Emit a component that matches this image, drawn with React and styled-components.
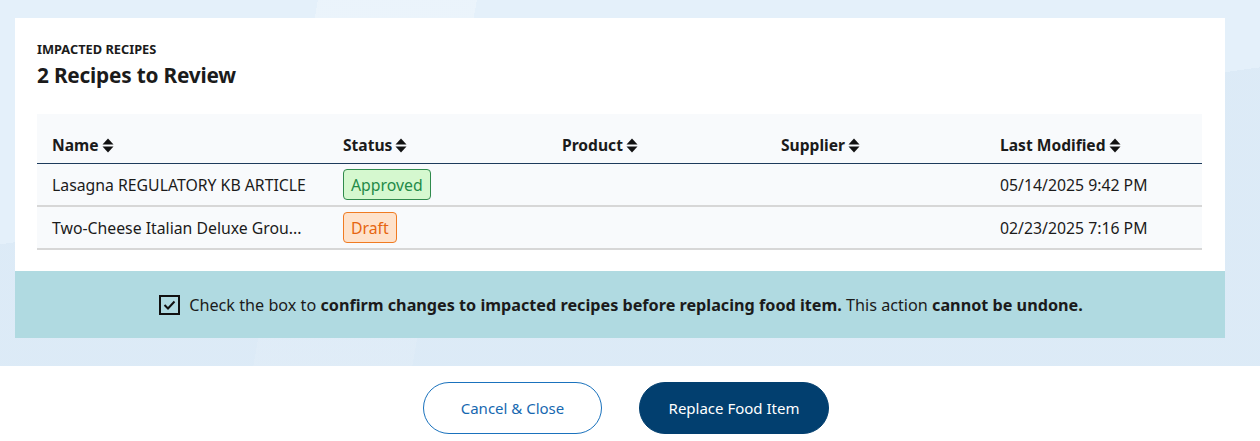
import React from "react";
import styled, { createGlobalStyle } from "styled-components";

const Global = createGlobalStyle`
  html, body { margin: 0; padding: 0; background: #ffffff; }
  body { font-family: "Noto Sans", "Open Sans", sans-serif; color: #1b1b1b; }
  * { box-sizing: border-box; }
`;

const Page = styled.div`
  width: 1260px;
  height: 441px;
  display: flex;
  flex-direction: column;
  overflow: hidden;
`;

const Backdrop = styled.div`
  background-color: #e4f0fa;
  background-image:
    linear-gradient(172deg, rgba(214, 230, 244, 0) 0 45%, rgba(214, 230, 244, 0.55) 45% 100%),
    linear-gradient(100deg, rgba(255, 255, 255, 0) 0 24%, rgba(255, 255, 255, 0.25) 24% 36%, rgba(255, 255, 255, 0) 36% 100%);
  height: 366px;
  padding: 18px 35px 0 15px;
  display: flex;
  flex-direction: column;
`;

const Card = styled.section`
  background: #ffffff;
  height: 253px;
  padding: 24px 23px 0 22px;
`;

const Eyebrow = styled.div`
  font-size: 12.8px;
  font-weight: 700;
  line-height: 14px;
  text-transform: uppercase;
`;

const Title = styled.h2`
  margin: 6px 0 0;
  font-size: 20.8px;
  font-weight: 700;
  line-height: 26px;
  letter-spacing: -0.2px;
`;

const Table = styled.table`
  margin-top: 26px;
  width: 100%;
  border-collapse: collapse;
  background: #f8fafc;
  table-layout: fixed;
`;

const Th = styled.th`
  text-align: left;
  font-size: 15.6px;
  font-weight: 700;
  padding: 22px 15px 9px;
  height: 49px;
  line-height: 18px;
  border-bottom: 1px solid #1d3b5c;
  width: ${(p) => p.$w}px;
`;

const ThInner = styled.span`
  display: inline-flex;
  align-items: center;
  gap: 3px;
`;

const SortIcon = () => (
  <svg width="12" height="15" viewBox="0 0 12 15" aria-hidden="true">
    <path d="M6 0.5 L11.5 6.5 H0.5 Z" fill="#111" />
    <path d="M6 14.5 L11.5 8.5 H0.5 Z" fill="#111" />
  </svg>
);

const Tr = styled.tr`
  border-bottom: 2px solid #d7d7d7;
`;

const Td = styled.td`
  font-size: 15.8px;
  padding: 5px 15px 5px;
  height: 42px;
  line-height: 18px;
  white-space: nowrap;
  overflow: hidden;
  text-overflow: ellipsis;
`;

const tones = {
  approved: { bg: "#d5f8cf", border: "#2f8a4c", fg: "#238a48" },
  draft: { bg: "#fee2cb", border: "#f07b22", fg: "#e6650f" },
};

const Badge = styled.span`
  display: inline-flex;
  align-items: center;
  height: 31px;
  padding: 0 7px;
  border-radius: 4px;
  font-size: 15.8px;
  background: ${(p) => tones[p.$tone].bg};
  border: 1px solid ${(p) => tones[p.$tone].border};
  color: ${(p) => tones[p.$tone].fg};
`;

const Banner = styled.div`
  background: #b0dae1;
  height: 67px;
  display: flex;
  align-items: center;
  justify-content: center;
  gap: 9px;
  padding-left: 2px;
  font-size: 16.2px;
  line-height: 20px;
`;

const Box = styled.span`
  width: 21px;
  height: 20px;
  border: 2px solid #111111;
  display: inline-flex;
  align-items: center;
  justify-content: center;
  flex: none;
`;

const Footer = styled.div`
  flex: 1;
  background: #ffffff;
  display: flex;
  align-items: flex-start;
  justify-content: center;
  padding: 16px 8px 0 0;
  gap: 37px;
`;

const Button = styled.button`
  height: 52px;
  width: ${(p) => (p.$primary ? 190 : 179)}px;
  padding: 0;
  border-radius: 26px;
  font-family: inherit;
  font-size: 15px;
  border: 1px solid ${(p) => (p.$primary ? "#023f6f" : "#1a72bd")};
  background: ${(p) => (p.$primary ? "#023f6f" : "#ffffff")};
  color: ${(p) => (p.$primary ? "#ffffff" : "#1668b0")};
  cursor: pointer;
`;

const cols = [
  ["Name", 291],
  ["Status", 219],
  ["Product", 219],
  ["Supplier", 219],
  ["Last Modified", 217],
];

const rows = [
  { name: "Lasagna REGULATORY KB ARTICLE", status: "Approved", tone: "approved", date: "05/14/2025 9:42 PM" },
  { name: "Two-Cheese Italian Deluxe Grou...", status: "Draft", tone: "draft", date: "02/23/2025 7:16 PM" },
];

export default function App() {
  return (
    <Page>
      <Global />
      <Backdrop>
        <Card>
          <Eyebrow>Impacted Recipes</Eyebrow>
          <Title>2 Recipes to Review</Title>
          <Table>
            <thead>
              <tr>
                {cols.map(([label, w]) => (
                  <Th key={label} $w={w}>
                    <ThInner>
                      {label}
                      <SortIcon />
                    </ThInner>
                  </Th>
                ))}
              </tr>
            </thead>
            <tbody>
              {rows.map((r) => (
                <Tr key={r.name}>
                  <Td>{r.name}</Td>
                  <Td>
                    <Badge $tone={r.tone}>{r.status}</Badge>
                  </Td>
                  <Td />
                  <Td />
                  <Td>{r.date}</Td>
                </Tr>
              ))}
            </tbody>
          </Table>
        </Card>
        <Banner>
          <Box>
            <svg width="13" height="10" viewBox="0 0 13 10" fill="none">
              <path d="M1.5 5 L5 8.5 L11.5 1.5" stroke="#111" strokeWidth="2" />
            </svg>
          </Box>
          <span>
            Check the box to <b>confirm changes to impacted recipes before replacing food item.</b> This action{" "}
            <b>cannot be undone.</b>
          </span>
        </Banner>
      </Backdrop>
      <Footer>
        <Button>Cancel &amp; Close</Button>
        <Button $primary>Replace Food Item</Button>
      </Footer>
    </Page>
  );
}
